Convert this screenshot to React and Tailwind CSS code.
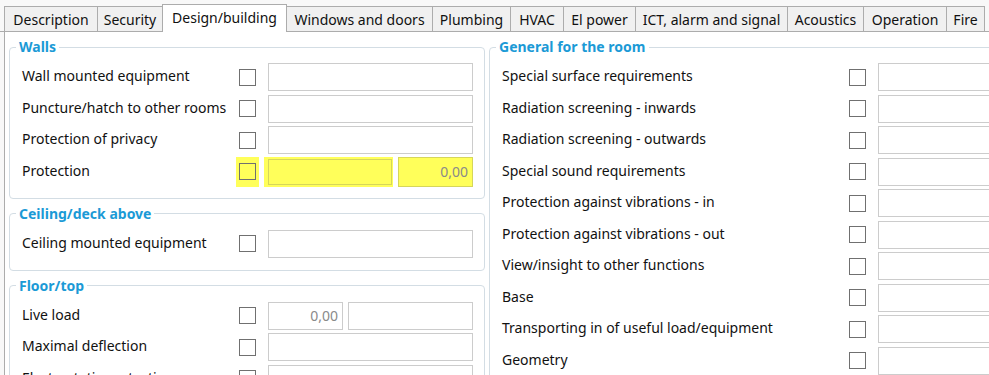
import React from "react";

const tabs = [
  { name: "Description", w: "w-[94px]" },
  { name: "Security", w: "w-[66px]" },
  { name: "Design/building", w: "w-[125px]", active: true },
  { name: "Windows and doors", w: "w-[147px]" },
  { name: "Plumbing", w: "w-[79px]" },
  { name: "HVAC", w: "w-[54px]" },
  { name: "El power", w: "w-[73px]" },
  { name: "ICT, alarm and signal", w: "w-[153px]" },
  { name: "Acoustics", w: "w-[77px]" },
  { name: "Operation", w: "w-[84px]" },
  { name: "Fire", w: "w-[39px]" },
];

const roomRows = [
  "Special surface requirements",
  "Radiation screening - inwards",
  "Radiation screening - outwards",
  "Special sound requirements",
  "Protection against vibrations - in",
  "Protection against vibrations - out",
  "View/insight to other functions",
  "Base",
  "Transporting in of useful load/equipment",
  "Geometry",
];

function Check({ yellow }) {
  return (
    <div
      className={
        yellow
          ? "h-[17px] w-[17px] shrink-0 border border-[#707070] bg-[#ffff5a]"
          : "h-[17px] w-[17px] shrink-0 border border-[#707070] bg-white"
      }
    />
  );
}

function Field({ className = "w-[205px]", value }) {
  return (
    <div
      className={`flex h-[28px] shrink-0 items-center justify-end border border-[#cccccc] bg-white pr-[4px] text-[#8a8a8a] ${className}`}
    >
      {value}
    </div>
  );
}

function Row({ label, wide, children }) {
  return (
    <div className="flex h-[28px] items-center">
      <span className={wide ? "w-[347px] shrink-0 pb-[3px]" : "w-[217px] shrink-0 pb-[3px]"}>{label}</span>
      <Check />
      <div className="ml-[12px] flex gap-[5px]">{children || <Field />}</div>
    </div>
  );
}

function Group({ title, className = "", children }) {
  return (
    <fieldset className={`rounded-[4px] border border-[#d3dde4] pb-[12px] pl-[12px] pr-[11px] pt-[7px] ${className}`}>
      <legend className="-ml-[6px] px-[3px] text-[14px] font-bold leading-[18px] text-[#1b9ad6]">{title}</legend>
      <div className="flex flex-col gap-[3.5px]">{children}</div>
    </fieldset>
  );
}

export default function App() {
  return (
    <div className="flex h-[375px] w-[989px] flex-col overflow-hidden bg-[#f8f8f8] font-['Noto_Sans','Open_Sans',sans-serif] text-[14px] text-[#111]">
      <div className="flex h-[32px] shrink-0 items-end border-b border-[#acacac] pl-[4px]">
        {tabs.map((t, i) =>
          t.active ? (
            <div
              key={t.name}
              className={`relative z-10 -mb-px -ml-px flex h-[28px] shrink-0 items-center justify-center border border-b-0 border-[#acacac] bg-white pb-[3px] ${t.w}`}
            >
              {t.name}
            </div>
          ) : (
            <div
              key={t.name}
              className={`flex h-[25px] shrink-0 items-center justify-center border border-b-0 border-[#acacac] bg-[#f0f0f0] ${i === 0 ? "" : "-ml-px"} ${t.w}`}
            >
              {t.name}
            </div>
          )
        )}
      </div>

      <div className="ml-[4px] flex flex-1 gap-[4px] border-l border-[#acacac] bg-white pl-[4px] pt-[6px]">
        <div className="flex w-[476px] shrink-0 flex-col gap-[6px]">
          <Group title="Walls">
            <Row label="Wall mounted equipment" />
            <Row label="Puncture/hatch to other rooms" />
            <Row label="Protection of privacy" />
            <div className="flex h-[28px] items-center">
              <span className="w-[214px] shrink-0 pb-[3px]">Protection</span>
              <div className="flex h-[30px] w-[23px] shrink-0 items-center justify-center bg-[#ffff5a]">
                <Check yellow />
              </div>
              <div className="ml-[5px] flex h-[30px] w-[129px] shrink-0 bg-[#ffff5a] py-[2px] pl-[4px] pr-[1px]">
                <div className="flex-1 border border-[#d6d65a]" />
              </div>
              <div className="ml-[5px] flex h-[30px] w-[75px] shrink-0 items-center justify-end border border-[#d6d65a] bg-[#ffff5a] pr-[4px] text-[#8a8a8a]">
                0,00
              </div>
            </div>
          </Group>

          <Group title="Ceiling/deck above">
            <Row label="Ceiling mounted equipment" />
          </Group>

          <Group title="Floor/top">
            <Row label="Live load">
              <Field className="w-[75px]" value="0,00" />
              <Field className="w-[125px]" />
            </Row>
            <Row label="Maximal deflection" />
            <Row label="Electrostatic protection" />
          </Group>
        </div>

        <div className="w-[605px] shrink-0">
          <Group title="General for the room">
            {roomRows.map((r) => (
              <Row key={r} label={r} wide />
            ))}
          </Group>
        </div>
      </div>
    </div>
  );
}
